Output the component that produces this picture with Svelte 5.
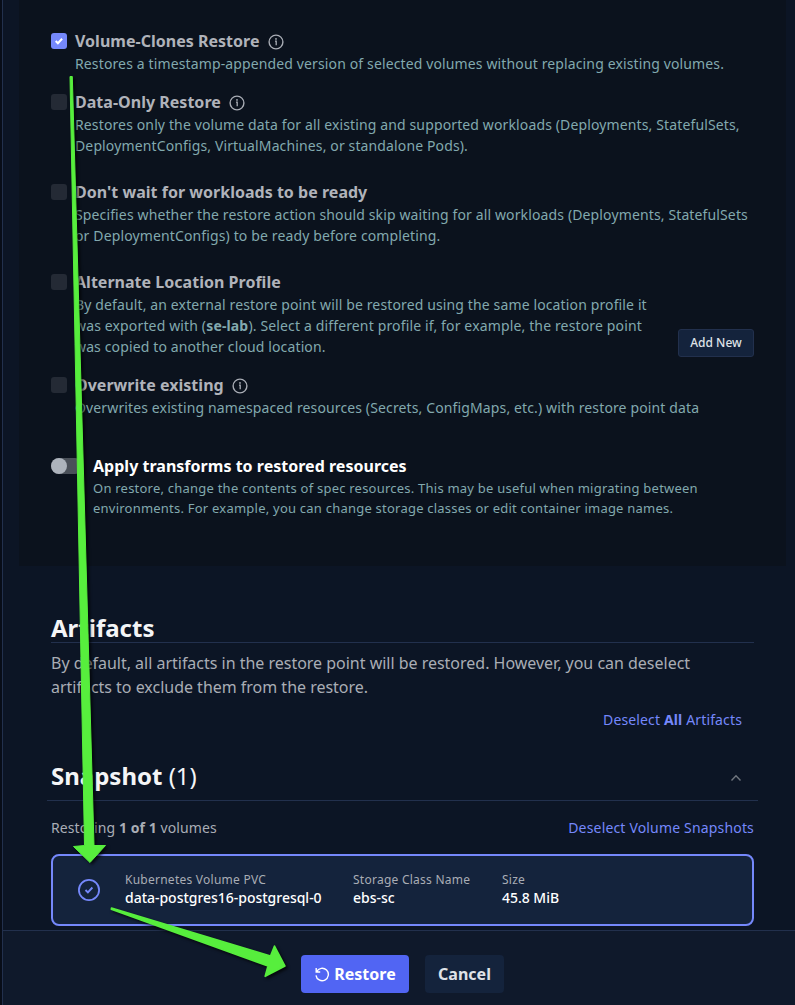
<script>
  const options = [
    { title: 'Volume-Clones Restore', info: true, checked: true, gap: 16,
      lines: ['Restores a timestamp-appended version of selected volumes without replacing existing volumes.'] },
    { title: 'Data-Only Restore', info: true, gap: 24,
      lines: ['Restores only the volume data for all existing and supported workloads (Deployments, StatefulSets,', 'DeploymentConfigs, VirtualMachines, or standalone Pods).'] },
    { title: "Don't wait for workloads to be ready", gap: 24,
      lines: ['Specifies whether the restore action should skip waiting for all workloads (Deployments, StatefulSets', 'or DeploymentConfigs) to be ready before completing.'] },
    { title: 'Alternate Location Profile', profile: 'se-lab', action: 'Add New', gap: 16, lines: [] },
    { title: 'Overwrite existing', info: true, gap: 36,
      lines: ['Overwrites existing namespaced resources (Secrets, ConfigMaps, etc.) with restore point data'] }
  ];
  const fields = [
    { label: 'Kubernetes Volume PVC', value: 'data-postgres16-postgresql-0', width: 228 },
    { label: 'Storage Class Name', value: 'ebs-sc', width: 149 },
    { label: 'Size', value: '45.8 MiB', width: 90 }
  ];
</script>

<div class="page">
  <main class="panel">
    <section class="options">
      {#each options as o}
        <div class="option" style="margin-bottom:{o.gap}px">
          <span class="box" class:checked={o.checked}>
            {#if o.checked}
              <svg width="16" height="16" viewBox="0 0 16 16"><path d="M4.700 8l2.200 2.200 4.200-4.500" fill="none" stroke="#fff" stroke-width="2" /></svg>
            {/if}
          </span>
          <div class="body">
            <div class="title"><span>{o.title}</span>
              {#if o.info}
                <svg width="16" height="16" viewBox="0 0 16 16"><circle cx="8" cy="8" r="6.900" fill="none" stroke="#a9adb5" stroke-width="1.400" /><path d="M7 7.200h1.200v4" fill="none" stroke="#a9adb5" stroke-width="1.300" /><circle cx="8" cy="4.900" r=".9" fill="#a9adb5" /></svg>
              {/if}
            </div>
            {#each o.lines as l}<div class="desc">{l}</div>{/each}
            {#if o.profile}
              <div class="desc">By default, an external restore point will be restored using the same location profile it</div>
              <div class="desc mid">was exported with (<b>{o.profile}</b>). Select a different profile if, for example, the restore point</div>
              <div class="desc">was copied to another cloud location.</div>
            {/if}
          </div>
          {#if o.action}<button class="add">{o.action}</button>{/if}
        </div>
      {/each}
      <div class="transform">
        <span class="toggle"><i></i></span>
        <div>
          <div class="title white"><span>Apply transforms to restored resources</span></div>
          <div class="small">On restore, change the contents of spec resources. This may be useful when migrating between</div>
          <div class="small">environments. For example, you can change storage classes or edit container image names.</div>
        </div>
      </div>
    </section>

    <section class="artifacts">
      <h2><span>Artifacts</span></h2>
      <p><span>By default, all artifacts in the restore point will be restored. However, you can deselect</span><br /><span>artifacts to exclude them from the restore.</span></p>
      <a class="all"><span>Deselect <b>All</b> Artifacts</span></a>
      <div class="snap">
        <h2><span>Snapshot <em>(1)</em></span></h2>
        <svg width="12" height="12" viewBox="0 0 12 12"><path d="M1.500 8.500L6 3.800l4.500 4.700" fill="none" stroke="#70767f" stroke-width="1.400" /></svg>
      </div>
      <div class="count">
        <span>Restoring <b>1 of 1</b> volumes</span>
        <a><span>Deselect Volume Snapshots</span></a>
      </div>
      <div class="card">
        <svg class="tick" width="24" height="24" viewBox="0 0 24 24" fill="none" stroke="#7588fb"><circle cx="12" cy="12" r="10.100" stroke-width="1.800" /><path d="M8.500 12l2.400 2.400 4.500-4.900" stroke-width="1.900" /></svg>
        {#each fields as f}
          <div class="field" style="width:{f.width}px">
            <div class="label"><span>{f.label}</span></div>
            <div class="value"><span>{f.value}</span></div>
          </div>
        {/each}
      </div>
    </section>

    <footer>
      <button class="primary">
        <svg width="16" height="16" viewBox="0 0 16 16" fill="none" stroke="#fff" stroke-width="1.400"><path d="M2.200 2v4h4M2.600 5.700A6.200 6.200 0 1 1 2 9.300" /></svg>
        <span>Restore</span>
      </button>
      <button class="cancel"><span>Cancel</span></button>
    </footer>
  </main>

  <svg class="arrows" width="795" height="1005" viewBox="0 0 795 1005">
    <g fill="#57ee3d" stroke="#57ee3d" stroke-linejoin="round">
      <path d="M70 76.500L72.300 76.500L94 845.500H105.500L90 862.500L73.500 846.500L84.500 845.500Z" />
      <path d="M111.500 908L270.500 956L274.500 946L285 966L265.200 976.300L268 966L111.300 909.300Z" stroke-width="1.600" />
    </g>
  </svg>
</div>

<style>
  :global(body) { margin: 0; background: #080d18; }
  .page { position: relative; width: 795px; height: 1005px; overflow: hidden; background: #080d18; font-family: "Noto Sans", sans-serif; font-size: 14px; color: #a9adb5; padding-left: 2px; box-sizing: border-box; white-space: nowrap; }
  .panel { height: 100%; box-sizing: border-box; border-left: 1px solid #22304d; background: #0c1525; display: flex; flex-direction: column; }
  .options { box-sizing: border-box; height: 566px; width: 767px; margin-left: 16px; padding: 29px 32px 0; background: #0b121d; }
  .option { display: flex; }
  .box { width: 16px; height: 16px; margin: 4px 8px 0 0; border-radius: 3px; background: #242a35; flex: none; }
  .box.checked { background: #7588fb; }
  .box svg { display: block; }
  .body { flex: 1; }
  .title { height: 24px; line-height: 24px; font-size: 16px; font-weight: 700; color: #b0b3ba; display: flex; align-items: center; gap: 8px; letter-spacing: .02px; }
  .title svg { margin-top: 2px; }
  .white { color: #fff; }
  .desc { height: 21px; line-height: 21px; color: #82a9ae; letter-spacing: .13px; }
  .mid { letter-spacing: .145px; }
  button { font: inherit; border: 0; padding: 0; margin: 0; display: flex; align-items: center; justify-content: center; box-sizing: border-box; }
  .add { width: 76px; height: 28px; align-self: flex-end; margin-left: -76px; padding-bottom: 2px; background: #14233c; border: 1px solid #22304d; border-radius: 3px; color: #dfe2e7; font-size: 12px; font-weight: 500; }
  .transform { display: flex; }
  .toggle { width: 32px; height: 16px; border-radius: 8px; background: #4a5059; margin: 4px 10px 0 0; }
  .toggle i { display: block; width: 16px; height: 16px; border-radius: 50%; background: #adb3bc; }
  .small { height: 20px; line-height: 20px; font-size: 13px; color: #82a9ae; letter-spacing: .226px; }
  .artifacts { margin: 45px 0 0 48px; width: 703px; }
  h2 { margin: 0; font-size: 24px; line-height: 31px; font-weight: 700; color: #f4f5f7; }
  em { font-style: normal; font-weight: 400; }
  .artifacts > h2 { box-sizing: border-box; height: 32px; line-height: 33px; border-bottom: 1px solid #22304d; }
  p { margin: 8px 0 0; font-size: 16px; line-height: 24px; letter-spacing: -.015px; }
  a { color: #7588fb; letter-spacing: .17px; }
  .all { display: flex; justify-content: flex-end; margin: 11px 12px 0 0; line-height: 20px; letter-spacing: .14px; white-space: pre; }
  .snap { display: flex; justify-content: space-between; align-items: center; height: 45px; margin: 25px -4px 0; padding: 0 16px 0 4px; border-bottom: 1px solid #22304d; }
  .snap h2 { margin-top: -5px; }
  .count { display: flex; justify-content: space-between; line-height: 20px; margin-top: 17px; letter-spacing: .08px; }
  .card { display: flex; align-items: center; box-sizing: border-box; height: 72px; margin-top: 16px; border: 2px solid #7588fb; border-radius: 8px; background: #14233c; padding-left: 24px; }
  .tick { margin-right: 24px; }
  .field { margin-top: -3px; }
  .label { font-size: 12px; line-height: 18px; letter-spacing: .25px; }
  .value { font-size: 14px; line-height: 18px; font-weight: 500; color: #fff; letter-spacing: -.02px; }
  footer { box-sizing: border-box; height: 75px; margin-top: auto; border-top: 1px solid #22304d; background: #0f192b; padding: 24px 0 0 298px; display: flex; gap: 16px; font-size: 16px; font-weight: 700; }
  footer button { height: 38px; border-radius: 4px; gap: 4px; }
  .primary { width: 108px; background: #5165f3; color: #fff; }
  .cancel { width: 79px; background: #14233c; color: #dfe2e7; }
  .arrows { position: absolute; left: 0; top: 0; filter: drop-shadow(2px 2px 1.500px rgba(0, 0, 0, .7)); }
</style>
